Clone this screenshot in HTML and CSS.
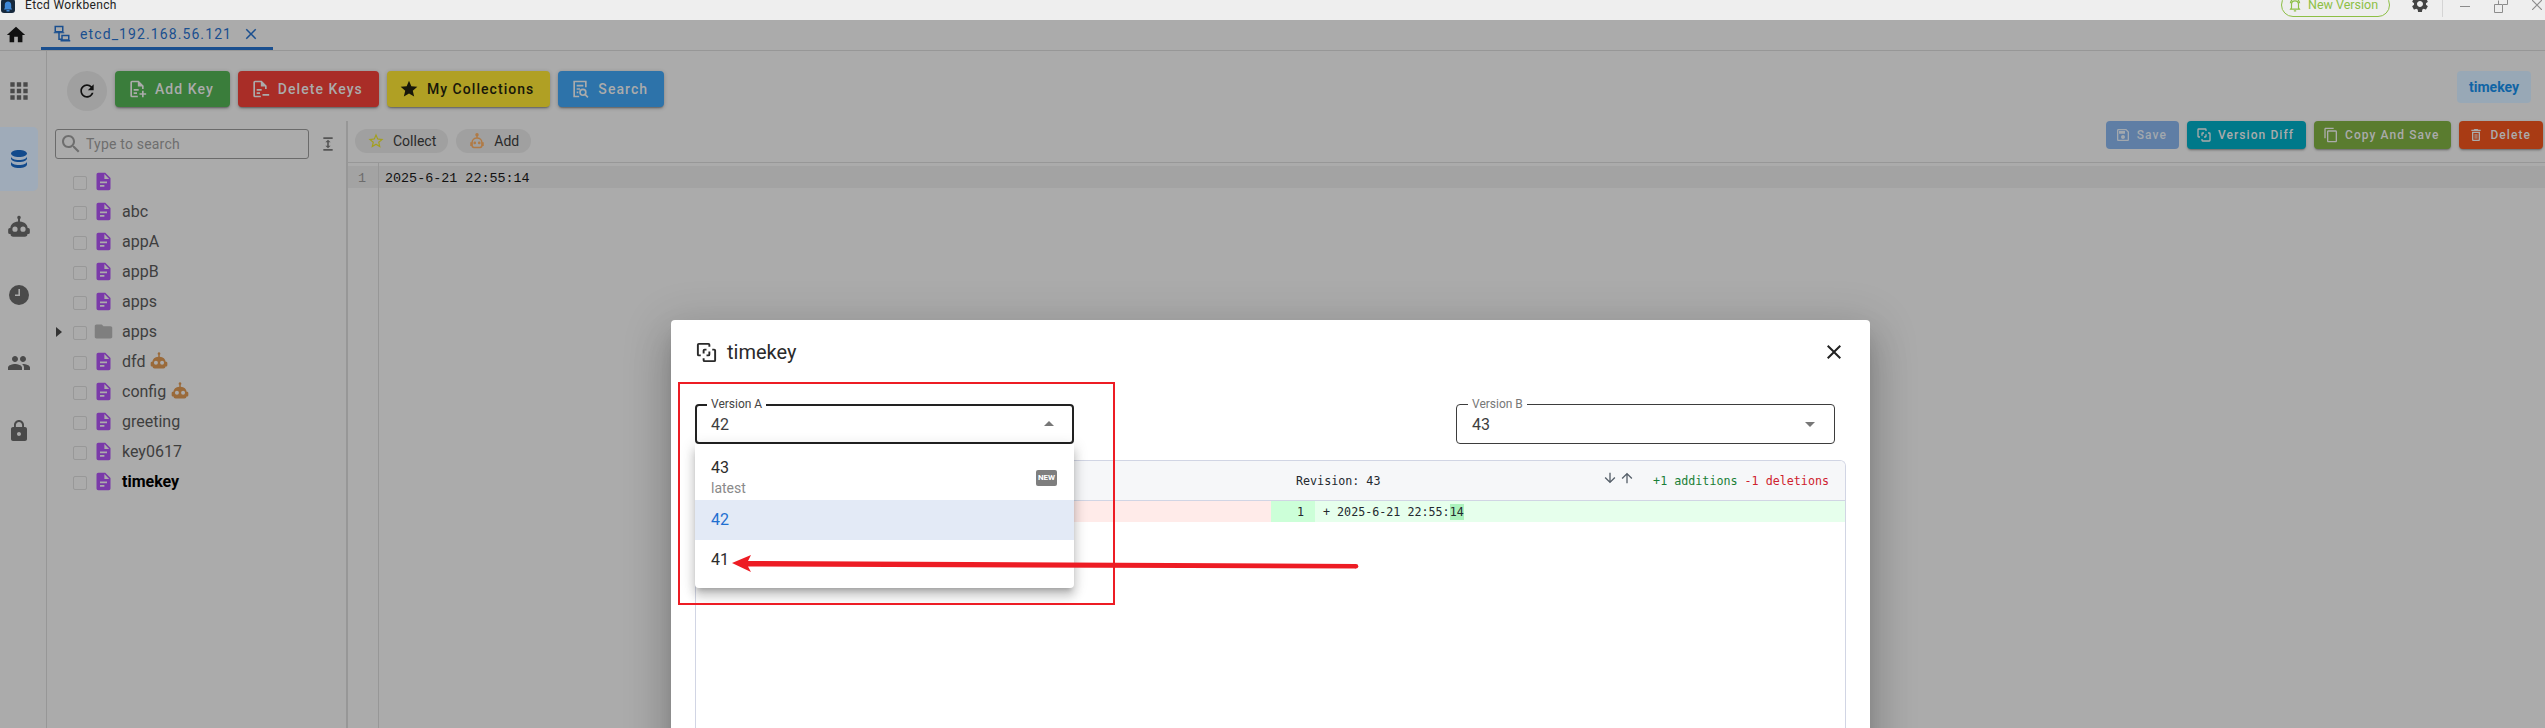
FILE: index.html
```html
<!DOCTYPE html>
<html lang="en">
<head>
<meta charset="utf-8">
<title>Etcd Workbench</title>
<link rel="stylesheet" href="styles.css">
</head>
<body>
<svg class="defs" aria-hidden="true">
  <symbol id="i-file" viewBox="0 0 24 24"><path fill-rule="evenodd" d="M14 2H6a2 2 0 0 0-2 2v16a2 2 0 0 0 2 2h12a2 2 0 0 0 2-2V8zm-1 1.5L18.5 9H13zM8 12h8v2H8zm0 4h5v2H8z"/></symbol>
  <symbol id="i-robot" viewBox="0 0 24 24"><path fill-rule="evenodd" d="M12 1.500a1.700 1.700 0 0 0-.9 3.100V7C7 7.300 4.300 9.800 4 13h-.5A1.500 1.500 0 0 0 2 14.500V17a1.500 1.500 0 0 0 1.500 1.500h.7A2.500 2.500 0 0 0 6.700 21h10.600a2.500 2.500 0 0 0 2.500-2.500h.7A1.500 1.500 0 0 0 22 17v-2.500a1.500 1.500 0 0 0-1.500-1.500H20c-.3-3.200-3-5.700-7.100-6V4.600A1.700 1.700 0 0 0 12 1.500zM8.300 11.600a2.400 2.400 0 1 1 0 4.800 2.400 2.400 0 0 1 0-4.800zm7.400 0a2.400 2.400 0 1 1 0 4.800 2.400 2.400 0 0 1 0-4.800z"/></symbol>
  <symbol id="i-robot-line" viewBox="0 0 24 24"><g fill="none" stroke="currentColor" stroke-width="2"><circle cx="12" cy="3.500" r="1.300"/><path d="M12 5v3M5.500 14c0-3.500 2.900-6 6.500-6s6.500 2.500 6.500 6v4a2.500 2.500 0 0 1-2.500 2.500H8A2.500 2.500 0 0 1 5.500 18zM5.500 14.500H4v3h1.500M18.500 14.500H20v3h-1.500"/></g><circle cx="9" cy="14.500" r="1.800"/><circle cx="15" cy="14.500" r="1.800"/></symbol>
  <symbol id="i-diff" viewBox="0 0 24 24"><path fill="none" stroke="currentColor" stroke-width="2" d="M15 6V4a1 1 0 0 0-1-1H4a1 1 0 0 0-1 1v10a1 1 0 0 0 1 1h2M9 18v2a1 1 0 0 0 1 1h10a1 1 0 0 0 1-1V10a1 1 0 0 0-1-1h-2M9 13v-3a1 1 0 0 1 1-1h2M15 11v3a1 1 0 0 1-1 1h-2"/></symbol>
</svg>

<div class="app">
  <header class="titlebar">
    <svg class="logo" viewBox="0 0 14 13"><rect width="14" height="14" y="-1" rx="3" fill="#16283c"/><path d="M7 1.500c2 0 3.200 1.500 3.200 3.500v3l1 1.500H2.800l1-1.500V5C3.800 3 5 1.500 7 1.500z" fill="#3f88d8"/><rect x="5.500" y="10" width="3" height="1.500" fill="#3f88d8"/></svg>
    <span class="app-name">Etcd Workbench</span>
    <div class="titlebar-right">
      <div class="update-pill">
        <svg class="bell" viewBox="0 0 24 24"><path fill="none" stroke="currentColor" stroke-width="2" d="M6 17V11c0-3.500 2.500-6 6-6s6 2.500 6 6v6l1.500 2h-15zM10 22h4M4 9c.3-2.500 1.300-4.500 3-6M20 9c-.3-2.500-1.300-4.500-3-6"/></svg>
        <span class="update-text">New Version</span>
      </div>
      <svg class="gear" viewBox="0 0 24 24"><path d="M19.140 12.940c.04-.3.06-.61.06-.94 0-.32-.02-.64-.07-.94l2.030-1.580c.18-.14.23-.41.12-.61l-1.920-3.320c-.12-.22-.37-.29-.59-.22l-2.390.96c-.5-.38-1.030-.7-1.620-.94L14.400 2.810c-.04-.24-.24-.41-.48-.41h-3.840c-.24 0-.43.17-.47.41L9.250 5.350c-.59.24-1.130.57-1.620.94l-2.390-.96c-.22-.08-.47 0-.59.22L2.740 8.870c-.12.21-.08.47.12.61l2.030 1.580c-.05.3-.09.63-.09.94s.02.64.07.94l-2.030 1.580c-.18.14-.23.41-.12.61l1.920 3.320c.12.22.37.29.59.22l2.390-.96c.5.38 1.030.7 1.620.94l.36 2.540c.05.24.24.41.48.41h3.840c.24 0 .44-.17.47-.41l.36-2.540c.59-.24 1.130-.56 1.620-.94l2.390.96c.22.08.47 0 .59-.22l1.920-3.320c.12-.22.07-.47-.12-.61zM12 15.600c-1.980 0-3.600-1.620-3.600-3.600s1.620-3.600 3.600-3.600 3.600 1.620 3.600 3.600-1.620 3.600-3.600 3.600z"/></svg>
      <span class="win-divider"></span>
      <span class="win-min"></span>
      <svg class="win-restore" viewBox="0 0 14 13"><path fill="none" stroke="#8c8c8c" d="M.5 4.500h8v8h-8zM4.500 4V.5M9 4.500h4.500V-1"/></svg>
      <svg class="win-close" viewBox="0 0 10 10"><path fill="none" stroke="#8c8c8c" stroke-width="1.200" d="M0 0l10 10M10 0L0 10"/></svg>
    </div>
  </header>

  <nav class="tabbar">
    <svg class="home" viewBox="0 0 24 24"><path d="M10 20v-6h4v6h5v-8h3L12 3 2 12h3v8z"/></svg>
    <div class="tab">
      <svg class="tab-icon" viewBox="0 0 24 24"><path fill="none" stroke="currentColor" stroke-width="2" d="M3 2h10v7H3zM8 9v10h3M12 14h9v6h-9z"/><path fill="currentColor" d="M1 9.500h14V11H1zM10 20h13v2H10z"/></svg>
      <span class="tab-label">etcd_192.168.56.121</span>
      <svg class="tab-close" viewBox="0 0 24 24"><path d="M19 6.410L17.590 5 12 10.590 6.410 5 5 6.410 10.590 12 5 17.590 6.410 19 12 13.410 17.590 19 19 17.590 13.410 12z"/></svg>
    </div>
  </nav>

  <div class="workspace">
    <aside class="rail">
      <div class="rail-item"><svg class="rail-icon apps" viewBox="0 0 24 24"><path d="M4 8h4V4H4v4zm6 12h4v-4h-4v4zm-6 0h4v-4H4v4zm0-6h4v-4H4v4zm6 0h4v-4h-4v4zm6-10v4h4V4h-4zm-6 4h4V4h-4v4zm6 6h4v-4h-4v4zm0 6h4v-4h-4v4z"/></svg></div>
      <div class="rail-item active"><svg class="rail-icon" viewBox="0 0 24 24"><path d="M12 3c4.400 0 8 1.600 8 3.500S16.400 10 12 10 4 8.400 4 6.500 7.600 3 12 3zM4 9.500c0 1.900 3.600 3.500 8 3.500s8-1.600 8-3.500v2c0 1.900-3.600 3.500-8 3.500s-8-1.600-8-3.500zM4 14.500c0 1.900 3.600 3.500 8 3.500s8-1.600 8-3.500v3c0 1.900-3.600 3.500-8 3.500s-8-1.600-8-3.500z"/></svg></div>
      <div class="rail-item"><svg class="rail-icon apps"><use href="#i-robot"/></svg></div>
      <div class="rail-item"><svg class="rail-icon" viewBox="0 0 24 24"><path fill-rule="evenodd" d="M12 2a10 10 0 1 0 0 20 10 10 0 0 0 0-20zm1 11H8v-1.600h3.400V6H13z"/></svg></div>
      <div class="rail-item"><svg class="rail-icon" viewBox="0 0 24 24"><path d="M16 11c1.660 0 2.990-1.340 2.990-3S17.660 5 16 5c-1.660 0-3 1.340-3 3s1.340 3 3 3zm-8 0c1.660 0 2.990-1.340 2.990-3S9.660 5 8 5C6.340 5 5 6.340 5 8s1.340 3 3 3zm0 2c-2.330 0-7 1.170-7 3.500V19h14v-2.500c0-2.330-4.670-3.500-7-3.500zm8 0c-.29 0-.62.02-.97.05 1.160.84 1.970 1.970 1.970 3.450V19h6v-2.500c0-2.330-4.670-3.500-7-3.500z"/></svg></div>
      <div class="rail-item"><svg class="rail-icon" viewBox="0 0 24 24"><path d="M18 8h-1V6c0-2.760-2.240-5-5-5S7 3.240 7 6v2H6c-1.100 0-2 .9-2 2v10c0 1.100.9 2 2 2h12c1.100 0 2-.9 2-2V10c0-1.100-.9-2-2-2zm-6 9c-1.100 0-2-.9-2-2s.9-2 2-2 2 .9 2 2-.9 2-2 2zm3.100-9H8.900V6c0-1.710 1.390-3.100 3.100-3.100 1.710 0 3.100 1.390 3.100 3.100v2z"/></svg></div>
    </aside>

    <main class="main">
      <div class="toolbar">
        <button class="refresh"><svg viewBox="0 0 24 24"><path d="M17.650 6.350C16.200 4.900 14.210 4 12 4c-4.420 0-7.990 3.580-7.990 8s3.570 8 7.990 8c3.730 0 6.840-2.550 7.730-6h-2.080c-.82 2.330-3.040 4-5.650 4-3.310 0-6-2.690-6-6s2.690-6 6-6c1.660 0 3.140.69 4.220 1.780L13 11h7V4l-2.350 2.350z"/></svg></button>
        <button class="btn green"><svg viewBox="0 0 24 24"><path d="M14 2H6a2 2 0 0 0-2 2v16a2 2 0 0 0 2 2h7v-2H6V4h7v5h5v3h2V8zM8 12h6v2H8zm0 4h4v2H8zM18 14v3h-3v2h3v3h2v-3h3v-2h-3v-3z"/></svg>Add Key</button>
        <button class="btn red"><svg viewBox="0 0 24 24"><path d="M14 2H6a2 2 0 0 0-2 2v16a2 2 0 0 0 2 2h7v-2H6V4h7v5h5v3h2V8zM8 12h6v2H8zm0 4h4v2H8zM15 18h8v2h-8z"/></svg>Delete Keys</button>
        <button class="btn yellow"><svg viewBox="0 0 24 24"><path d="M12 17.270L18.180 21l-1.640-7.030L22 9.240l-7.190-.61L12 2 9.190 8.630 2 9.240l5.460 4.730L5.820 21z"/></svg>My Collections</button>
        <button class="btn blue"><svg viewBox="0 0 24 24"><path fill="none" stroke="currentColor" stroke-width="2" d="M11 21H5V3h14v7M8 8h8M8 12h4M8 16h2"/><circle cx="15.500" cy="16" r="3.500" fill="none" stroke="currentColor" stroke-width="2"/><path fill="none" stroke="currentColor" stroke-width="2" d="M18 18.500l3.500 3.500"/></svg>Search</button>
        <span class="key-badge">timekey</span>
      </div>

      <div class="panes">
        <section class="tree">
          <div class="tree-search">
            <label class="search-box">
              <svg viewBox="0 0 24 24"><path d="M15.500 14h-.79l-.28-.27C15.410 12.590 16 11.110 16 9.500 16 5.910 13.090 3 9.500 3S3 5.910 3 9.500 5.910 16 9.500 16c1.610 0 3.090-.59 4.230-1.570l.27.28v.79l5 4.990L20.490 19l-4.990-5zm-6 0C7.010 14 5 11.990 5 9.500S7.010 5 9.500 5 14 7.010 14 9.500 11.990 14 9.500 14z"/></svg>
              <span>Type to search</span>
            </label>
            <svg class="expand" viewBox="0 0 24 24"><path d="M5 2h14v2.500H5zM5 19.500h14V22H5zM12 5.500l-4 4h2.800v5H8l4 4 4-4h-2.800v-5H16z"/></svg>
          </div>
          <ul class="tree-list">
            <li class="row"><span class="caret"></span><span class="check"></span><svg class="file"><use href="#i-file"/></svg><span class="name"></span></li>
            <li class="row"><span class="caret"></span><span class="check"></span><svg class="file"><use href="#i-file"/></svg><span class="name">abc</span></li>
            <li class="row"><span class="caret"></span><span class="check"></span><svg class="file"><use href="#i-file"/></svg><span class="name">appA</span></li>
            <li class="row"><span class="caret"></span><span class="check"></span><svg class="file"><use href="#i-file"/></svg><span class="name">appB</span></li>
            <li class="row"><span class="caret"></span><span class="check"></span><svg class="file"><use href="#i-file"/></svg><span class="name">apps</span></li>
            <li class="row"><span class="caret closed"></span><span class="check"></span><svg class="folder" viewBox="0 0 24 24"><path d="M10 4H4c-1.100 0-1.990.9-1.990 2L2 18c0 1.100.9 2 2 2h16c1.100 0 2-.9 2-2V8c0-1.100-.9-2-2-2h-8l-2-2z"/></svg><span class="name">apps</span></li>
            <li class="row"><span class="caret"></span><span class="check"></span><svg class="file"><use href="#i-file"/></svg><span class="name">dfd</span><svg class="bot"><use href="#i-robot"/></svg></li>
            <li class="row"><span class="caret"></span><span class="check"></span><svg class="file"><use href="#i-file"/></svg><span class="name">config</span><svg class="bot"><use href="#i-robot"/></svg></li>
            <li class="row"><span class="caret"></span><span class="check"></span><svg class="file"><use href="#i-file"/></svg><span class="name">greeting</span></li>
            <li class="row"><span class="caret"></span><span class="check"></span><svg class="file"><use href="#i-file"/></svg><span class="name">key0617</span></li>
            <li class="row current"><span class="caret"></span><span class="check"></span><svg class="file"><use href="#i-file"/></svg><span class="name">timekey</span></li>
          </ul>
        </section>

        <section class="detail">
          <div class="detail-head">
            <div class="chips">
              <span class="chip"><svg class="chip-star" viewBox="0 0 24 24"><path d="M22 9.240l-7.190-.62L12 2 9.190 8.630 2 9.240l5.460 4.730L5.820 21 12 17.270 18.180 21l-1.630-7.030L22 9.240zM12 15.400l-3.760 2.270 1-4.280-3.320-2.880 4.380-.38L12 6.100l1.710 4.040 4.380.38-3.320 2.880 1 4.280L12 15.400z"/></svg>Collect</span>
              <span class="chip"><svg class="chip-bot"><use href="#i-robot-line"/></svg>Add</span>
            </div>
            <div class="actions">
              <button class="btn-sm save"><svg viewBox="0 0 24 24"><path d="M17 3H5c-1.110 0-2 .9-2 2v14c0 1.100.89 2 2 2h14c1.100 0 2-.9 2-2V7l-4-4zm2 16H5V5h11.170L19 7.830V19zm-7-7c-1.660 0-3 1.340-3 3s1.340 3 3 3 3-1.340 3-3-1.340-3-3-3zM6 6h9v4H6z"/></svg>Save</button>
              <button class="btn-sm teal"><svg><use href="#i-diff"/></svg>Version Diff</button>
              <button class="btn-sm olive"><svg viewBox="0 0 24 24"><path d="M16 1H4c-1.100 0-2 .9-2 2v14h2V3h12V1zm3 4H8c-1.100 0-2 .9-2 2v14c0 1.100.9 2 2 2h11c1.100 0 2-.9 2-2V7c0-1.100-.9-2-2-2zm0 16H8V7h11v14z"/></svg>Copy And Save</button>
              <button class="btn-sm rust"><svg viewBox="0 0 24 24"><path d="M6 19c0 1.100.9 2 2 2h8c1.100 0 2-.9 2-2V7H6v12zM8 9h8v10H8zm7.500-5l-1-1h-5l-1 1H5v2h14V4zM10 10.500h1.300v7H10zm2.700 0H14v7h-1.300z"/></svg>Delete</button>
            </div>
          </div>
          <div class="code">
            <div class="gutter"><div class="gutter-line">1</div></div>
            <div class="lines"><div class="code-line">2025-6-21 22:55:14</div></div>
          </div>
        </section>
      </div>
    </main>
  </div>

  <div class="modal" role="dialog">
    <div class="modal-title">
      <svg class="modal-icon"><use href="#i-diff"/></svg>
      <span>timekey</span>
      <svg class="modal-close" viewBox="0 0 24 24"><path d="M19 6.410L17.590 5 12 10.590 6.410 5 5 6.410 10.590 12 5 17.590 6.410 19 12 13.410 17.590 19 19 17.590 13.410 12z"/></svg>
    </div>
    <div class="selects">
      <div class="field focused">
        <span class="field-label">Version A</span>
        <span class="field-value">42</span>
        <svg class="field-arrow" viewBox="0 0 24 24"><path d="M7 14l5-5 5 5z"/></svg>
        <ul class="menu">
          <li class="menu-item tall">
            <div><div>43</div><div class="menu-sub">latest</div></div>
            <span class="new-badge">NEW</span>
          </li>
          <li class="menu-item selected">42</li>
          <li class="menu-item">41</li>
        </ul>
      </div>
      <div class="field">
        <span class="field-label">Version B</span>
        <span class="field-value">43</span>
        <svg class="field-arrow" viewBox="0 0 24 24"><path d="M7 10l5 5 5-5z"/></svg>
      </div>
    </div>
    <div class="diff">
      <div class="diff-head">
        <div class="diff-head-cell"></div>
        <div class="diff-head-cell">
          <span>Revision: 43</span>
          <div class="diff-stats">
            <svg viewBox="0 0 24 24"><path d="M20 12l-1.410-1.410L13 16.170V4h-2v12.170l-5.580-5.590L4 12l8 8 8-8z"/></svg>
            <svg viewBox="0 0 24 24"><path d="M4 12l1.410 1.410L11 7.830V20h2V7.830l5.580 5.590L20 12l-8-8-8 8z"/></svg>
            <span class="adds">+1 additions</span>
            <span class="dels">-1 deletions</span>
          </div>
        </div>
      </div>
      <div class="diff-row">
        <div class="diff-side del"></div>
        <div class="diff-side add"><span class="diff-num">1</span><span class="diff-text">+ 2025-6-21 22:55:<mark>14</mark></span></div>
      </div>
    </div>
  </div>

  <div class="callout-box"></div>
  <svg class="callout-arrow" viewBox="0 0 640 30"><polygon points="7,13 26,5 23,11 631,14 631,18.500 23,16.500 26,22" fill="#ed1c24"/><circle cx="631" cy="16.250" r="2.250" fill="#ed1c24"/></svg>
</div>
</body>
</html>
```

FILE: styles.css
```css
* { box-sizing: border-box; }
html, body { margin: 0; padding: 0; }
body { font-family: Roboto, "Liberation Sans", sans-serif; background: #ababab; }
ul { list-style: none; margin: 0; padding: 0; }
button { font: inherit; border: 0; padding: 0; }
svg { display: block; flex: none; fill: currentColor; }
.defs { position: absolute; width: 0; height: 0; }

.app { position: relative; width: 2545px; height: 728px; overflow: hidden; display: flex; flex-direction: column; background: #ababab; }

/* title bar */
.titlebar { height: 20px; flex: none; display: flex; align-items: flex-start; background: #eeeeee; overflow: hidden; }
.logo { width: 14px; height: 13px; margin-left: 1px; }
.app-name { margin-left: 10px; font-size: 12px; line-height: 10px; letter-spacing: .35px; color: #222; }
.titlebar-right { margin-left: auto; margin-right: 3px; display: flex; align-items: flex-start; }
.update-pill { height: 24px; width: 109px; margin-top: -7px; display: flex; align-items: center; padding-left: 6px; gap: 6px; border: 1px solid #8dbf45; border-radius: 12px; color: #8dbf45; font-size: 12.500px; white-space: nowrap; }
.update-text { line-height: 10px; }
.bell { width: 14px; height: 14px; }
.gear { width: 20px; height: 20px; margin: -6px 0 0 20px; color: #444; }
.win-divider { width: 1px; height: 17px; margin-left: 12px; background: #d4d4d4; }
.win-min { width: 10px; height: 1px; margin: 6px 0 0 17px; background: #8c8c8c; }
.win-restore { width: 14px; height: 13px; margin-left: 24px; }
.win-close { width: 10px; height: 10px; margin-left: 24px; }

/* tab bar */
.tabbar { height: 31px; flex: none; display: flex; align-items: stretch; border-bottom: 1px solid #979797; }
.home { width: 22px; height: 22px; margin: 4px 0 0 5px; color: #111; }
.tab { width: 232px; margin-left: 14px; display: flex; align-items: center; padding-left: 12px; color: #1a4f8f; border-bottom: 3px solid #1a4f8f; height: 30px; }
.tab-icon { width: 18px; height: 18px; }
.tab-label { margin-left: 9px; font-size: 14px; letter-spacing: 1.1px; white-space: nowrap; }
.tab-close { width: 18px; height: 18px; margin-left: 10px; }

/* layout */
.workspace { flex: 1; min-height: 0; display: flex; }
.rail { width: 47px; flex: none; padding-top: 8px; display: flex; flex-direction: column; gap: 4px; border-right: 1px solid #979797; }
.rail-item { width: 38px; height: 64px; display: flex; align-items: center; justify-content: center; color: #4a4a4a; border-radius: 0 5px 5px 0; }
.rail-item.active { background: #9fabb9; color: #124a8c; }
.rail-icon { width: 24px; height: 24px; }
.rail-icon.apps { width: 26px; height: 26px; }

.main { flex: 1; min-width: 0; display: flex; flex-direction: column; padding-top: 20px; }
.toolbar { height: 40px; flex: none; display: flex; align-items: flex-start; gap: 8px; padding-left: 20px; }
.refresh { width: 40px; height: 40px; border-radius: 50%; background: #a0a0a0; color: #111; display: flex; align-items: center; justify-content: center; }
.refresh svg { width: 20px; height: 20px; }
.btn { height: 36px; display: flex; align-items: center; gap: 8px; padding: 0 16px 0 12px; border-radius: 4px; font-size: 14px; font-weight: 500; letter-spacing: 1.05px; color: #ababab; white-space: nowrap; box-shadow: 0 2px 2px -1px rgba(0,0,0,.35), 0 1px 4px rgba(0,0,0,.2); }
.btn svg { width: 20px; height: 20px; }
.green { background: #3a7d3b; }
.red { background: #a92d27; }
.yellow { background: #b0a024; color: #17170a; }
.blue { background: #2d73aa; }
.key-badge { margin: 0 14px 0 auto; width: 74px; height: 32px; display: flex; align-items: center; justify-content: center; border-radius: 4px; background: #98a8b6; color: #0f64a5; font-size: 14px; font-weight: 700; }

.panes { flex: 1; min-height: 0; margin-top: 10px; display: flex; }
.tree { width: 301px; flex: none; border-right: 2px solid #979797; padding-top: 8px; }
.tree-search { display: flex; align-items: center; padding-left: 8px; }
.search-box { width: 254px; height: 30px; display: flex; align-items: center; gap: 3px; padding-left: 3px; border: 1px solid #6b6b6b; border-radius: 3px; color: #6e6e6e; font-size: 14px; letter-spacing: .2px; }
.search-box svg { width: 24px; height: 24px; }
.expand { width: 16px; height: 16px; margin-left: 11px; color: #555; }
.tree-list { margin-top: 8px; }
.row { height: 30px; display: flex; align-items: center; padding-left: 6px; color: #3e3e3e; font-size: 16px; }
.caret { width: 14px; flex: none; }
.caret.closed { height: 10px; border-left: 6px solid #333; border-top: 5.500px solid transparent; border-bottom: 5.500px solid transparent; margin-left: 3px; width: 11px; }
.check { width: 14px; height: 14px; margin: 2px 0 0 6px; flex: none; border: 1px solid #989898; border-radius: 2px; }
.file { width: 21px; height: 21px; margin: -2px 0 0 6px; color: #7a3aa9; }
.folder { width: 21px; height: 21px; margin: -2px 0 0 6px; color: #7f7f7f; }
.name { margin: -1px 0 0 8px; }
.bot { width: 20px; height: 20px; margin: -2px 0 0 4px; color: #9a6a3a; }
.current { color: #000; font-weight: 700; }

.detail { flex: 1; min-width: 0; display: flex; flex-direction: column; }
.detail-head { height: 41px; flex: none; display: flex; justify-content: space-between; align-items: flex-start; padding: 0 2px 0 7px; }
.chips { display: flex; gap: 8px; margin-top: 8px; }
.chip { height: 24px; display: flex; align-items: center; gap: 8px; padding: 0 12px; border-radius: 12px; background: #a0a0a0; color: #2a2a2a; font-size: 14px; }
.chip-star { width: 18px; height: 18px; color: #a4a01e; }
.chip-bot { width: 18px; height: 18px; color: #b07a45; }
.actions { display: flex; gap: 8px; }
.btn-sm { height: 28px; display: flex; align-items: center; gap: 6px; padding: 0 12px 0 9px; border-radius: 4px; font-size: 12px; font-weight: 500; letter-spacing: 1.07px; color: #ababab; white-space: nowrap; box-shadow: 0 2px 2px -1px rgba(0,0,0,.3), 0 1px 3px rgba(0,0,0,.15); }
.btn-sm svg { width: 16px; height: 16px; }
.save { background: #5f7ea5; box-shadow: none; color: #a2a8ae; }
.teal { background: #00798a; }
.olive { background: #5a7c2f; }
.rust { background: #a93b14; }

.code { flex: 1; display: flex; border-top: 1px solid #979797; font-family: "Liberation Mono", monospace; font-size: 13.400px; }
.gutter { width: 31px; flex: none; border-right: 1px solid #979797; padding-top: 3px; }
.gutter-line { height: 22px; line-height: 26px; padding-left: 10px; background: #a3a3a3; color: #6c6c6c; }
.lines { flex: 1; padding-top: 3px; }
.code-line { height: 22px; line-height: 26px; padding-left: 6px; background: #a3a3a3; color: #111; }

/* modal */
.modal { position: absolute; left: 671px; top: 320px; width: 1199px; height: 500px; padding: 16px 24px 0; background: #fff; border-radius: 4px; display: flex; flex-direction: column; box-shadow: 0 11px 15px -7px rgba(0,0,0,.2), 0 24px 38px 3px rgba(0,0,0,.14), 0 9px 46px 8px rgba(0,0,0,.12); }
.modal-title { height: 32px; flex: none; display: flex; align-items: center; font-size: 20px; color: #2a2a2a; }
.modal-icon { width: 23px; height: 23px; margin-right: 9px; }
.modal-close { width: 24px; height: 24px; margin-left: auto; color: #222; }
.selects { margin-top: 36px; display: flex; justify-content: space-between; padding-right: 11px; flex: none; }
.field { position: relative; width: 379px; height: 40px; display: flex; align-items: center; justify-content: space-between; padding: 0 12px 0 15px; border: 1px solid #3d3d3d; border-radius: 4px; font-size: 16px; color: #3d3d3d; }
.field.focused { border: 2px solid #222; padding-left: 14px; padding-right: 11px; z-index: 2; }
.field-label { position: absolute; left: 11px; top: -8px; padding: 0 4px; background: #fff; font-size: 12px; line-height: 14px; color: #777; }
.focused .field-label { left: 10px; top: -9px; color: #444; }
.field-arrow { width: 24px; height: 24px; color: #777; }
.menu { position: absolute; left: -2px; top: 38px; width: 379px; padding: 8px 0; background: #fff; border-radius: 0 0 4px 4px; color: #2b2b2b; box-shadow: 0 5px 5px -3px rgba(0,0,0,.2), 0 8px 10px 1px rgba(0,0,0,.14), 0 3px 14px 2px rgba(0,0,0,.12); }
.menu-item { height: 40px; display: flex; align-items: center; padding: 0 17px 0 16px; line-height: 20px; }
.menu-item.tall { height: 48px; justify-content: space-between; padding-top: 4px; }
.menu-item.selected { background: #e3eaf6; color: #1f6fd0; }
.menu-sub { font-size: 14px; color: #8a8a8a; }
.new-badge { width: 21px; height: 16px; border-radius: 2px; background: #7e7e7e; color: #fff; font-size: 8px; font-weight: 700; line-height: 16px; text-align: center; }

.diff { margin-top: 16px; flex: 1; border: 1px solid #d1d5e4; border-bottom: 0; border-radius: 6px 6px 0 0; font-family: "DejaVu Sans Mono", "Liberation Mono", monospace; font-size: 11.700px; color: #24292f; overflow: hidden; }
.diff-head { height: 40px; display: grid; grid-template-columns: 575px 1fr; background: #f6f7f9; border-bottom: 1px solid #d1d5e4; }
.diff-head-cell { display: flex; align-items: center; justify-content: space-between; padding: 0 16px 0 25px; }
.diff-stats { display: flex; align-items: center; }
.diff-stats svg { width: 16px; height: 16px; margin: -6px 1px 0 0; color: #57606a; }
.adds { margin-left: 17px; color: #1a7f37; }
.dels { margin-left: 7px; color: #cf222e; }
.diff-row { height: 21px; display: grid; grid-template-columns: 575px 1fr; }
.diff-side { display: flex; align-items: center; }
.del { background: #ffebe9; }
.add { background: #e6ffec; }
.diff-num { width: 44px; height: 100%; display: flex; align-items: center; justify-content: flex-end; padding-right: 11px; background: #ccffd8; }
.diff-text { margin-left: 8px; white-space: pre; }
.diff-text mark { color: inherit; display: inline-block; height: 16px; line-height: 16px; background: #acf2bd; }

/* annotation drawn over the screenshot */
.callout-box { position: absolute; left: 678px; top: 382px; width: 437px; height: 223px; border: 2px solid #ed1c24; z-index: 3; }
.callout-arrow { position: absolute; left: 725px; top: 550px; width: 640px; height: 30px; z-index: 3; }
```
